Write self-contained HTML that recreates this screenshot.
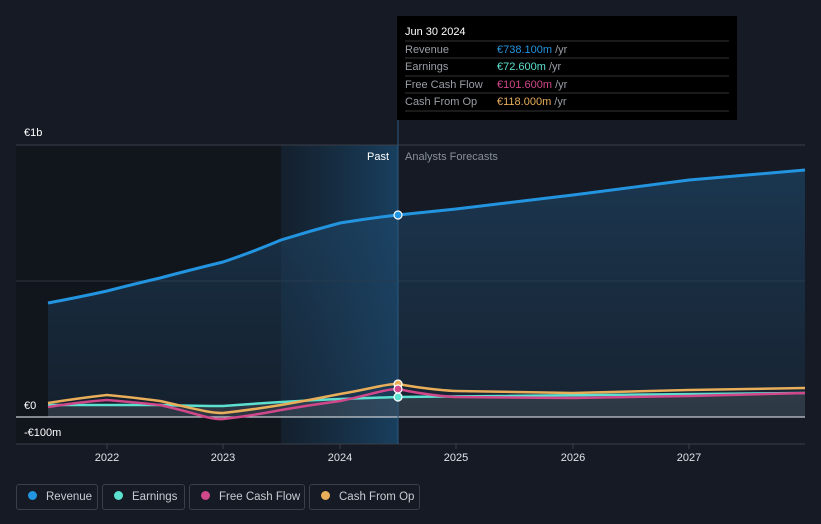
<!DOCTYPE html>
<html><head><style>
html,body{margin:0;background:#151a24;width:821px;height:524px;overflow:hidden;font-family:"Liberation Sans",sans-serif;}
.lg{position:absolute;top:484px;height:26px;border:1px solid #3a3f4a;border-radius:3px;color:#c8ccd2;font-size:11.5px;line-height:24px;box-sizing:border-box;white-space:nowrap;overflow:hidden;}
.lg i{display:inline-block;width:9px;height:9px;border-radius:50%;margin:0 9px 0 11px;}
</style></head><body>
<svg width="821" height="524" style="position:absolute;left:0;top:0" font-family="Liberation Sans, sans-serif">
<defs>
<linearGradient id="hl" x1="0" x2="1"><stop offset="0" stop-color="#1a3a55" stop-opacity="0.3"/><stop offset="1" stop-color="#1a4a70" stop-opacity="0.8"/></linearGradient>
<linearGradient id="ra" x1="0" y1="0" x2="0" y2="1"><stop offset="0" stop-color="#1e4a6e" stop-opacity="0.6"/><stop offset="1" stop-color="#1e3a55" stop-opacity="0.3"/></linearGradient>
</defs>
<rect x="16" y="145" width="382" height="299" fill="#11151c"/>
<rect x="281" y="145" width="117" height="299" fill="url(#hl)"/>
<line x1="16" y1="145" x2="805" y2="145" stroke="#3a3f4a"/>
<line x1="16" y1="281" x2="805" y2="281" stroke="#2e333d"/>
<line x1="16" y1="444" x2="805" y2="444" stroke="#3a3f4a"/>
<path d="M48,303 C80,297 107,291 107,291 C130,285 160,278 160,278 C190,270 223,262 223,262 C250,253 281,240 281,240 C310,231 340,223 340,223 C370,218 398,215 398,215 L456,209 L573,195 L689,180 L805,170 L805,417 L48,417Z" fill="url(#ra)"/>
<path d="M48,405 L160,405 L223,406 L340,399 L398,397 L805,393 L805,417 L48,417Z" fill="#5a606a" fill-opacity="0.35"/>
<line x1="16" y1="417" x2="805" y2="417" stroke="#c8ccd2" stroke-width="1.2"/>
<path d="M48,303 C80,297 107,291 107,291 C130,285 160,278 160,278 C190,270 223,262 223,262 C250,253 281,240 281,240 C310,231 340,223 340,223 C370,218 398,215 398,215 L456,209 L573,195 L689,180 L805,170" fill="none" stroke="#2394df" stroke-width="3"/>
<path d="M48,405 C100,405 160,405 160,405 C200,406 223,406 223,406 C290,401 340,399 340,399 C370,398 398,397 398,397 L805,393" fill="none" stroke="#5ce0d0" stroke-width="2.5"/>
<path d="M48,407 C80,402 107,400 107,400 C130,402 160,405 160,405 C200,414 210,420 223,419 C250,416 281,410 281,410 C310,405 340,401 340,401 C370,395 385,389 398,389 C430,396 456,397 456,397 L573,398 L689,396 L805,393" fill="none" stroke="#d0478a" stroke-width="2.5"/>
<path d="M48,403 C80,398 107,395 107,395 C130,397 160,401 160,401 C200,410 210,413 223,413 C250,410 281,405 281,405 C310,400 340,394 340,394 C370,389 385,384 398,384 C430,390 456,391 456,391 L573,393 L689,390 L805,388" fill="none" stroke="#e9ae5a" stroke-width="2.5"/>
<line x1="398" y1="120" x2="398" y2="444" stroke="#2a5a80" stroke-width="1"/>
<circle cx="398" cy="215" r="4" fill="#2394df" stroke="#fff" stroke-width="1.2"/>
<circle cx="398" cy="384" r="4" fill="#e9ae5a" stroke="#fff" stroke-width="1.2"/>
<circle cx="398" cy="389" r="4" fill="#d0478a" stroke="#fff" stroke-width="1.2"/>
<circle cx="398" cy="397" r="4" fill="#5ce0d0" stroke="#fff" stroke-width="1.2"/>
<g fill="#fff" font-size="11"><text x="24" y="136">€1b</text><text x="24" y="409">€0</text><text x="24" y="436">-€100m</text></g>
<text x="389" y="160" fill="#fff" font-size="11" text-anchor="end">Past</text>
<text x="405" y="160" fill="#8a909a" font-size="11">Analysts Forecasts</text>
<g fill="#e0e3e8" font-size="11" text-anchor="middle"><text x="107" y="461">2022</text><text x="223" y="461">2023</text><text x="340" y="461">2024</text><text x="456" y="461">2025</text><text x="573" y="461">2026</text><text x="689" y="461">2027</text></g>
<g stroke="#3a3f4a"><line x1="107" y1="444" x2="107" y2="449"/><line x1="223" y1="444" x2="223" y2="449"/><line x1="340" y1="444" x2="340" y2="449"/><line x1="456" y1="444" x2="456" y2="449"/><line x1="573" y1="444" x2="573" y2="449"/><line x1="689" y1="444" x2="689" y2="449"/></g>
<rect x="397" y="16" width="340" height="104" fill="#000"/>
<g stroke="#333" ><line x1="405" y1="41" x2="729" y2="41"/><line x1="405" y1="58" x2="729" y2="58"/><line x1="405" y1="76" x2="729" y2="76"/><line x1="405" y1="93" x2="729" y2="93"/><line x1="405" y1="111" x2="729" y2="111"/></g>
<g font-size="11"><text x="405" y="35" fill="#fff">Jun 30 2024</text>
<text x="405" y="53" fill="#9a9ea6">Revenue</text><text x="497" y="53" fill="#2394df">€738.100m <tspan fill="#9a9ea6">/yr</tspan></text>
<text x="405" y="70" fill="#9a9ea6">Earnings</text><text x="497" y="70" fill="#5ce0d0">€72.600m <tspan fill="#9a9ea6">/yr</tspan></text>
<text x="405" y="88" fill="#9a9ea6">Free Cash Flow</text><text x="497" y="88" fill="#d0478a">€101.600m <tspan fill="#9a9ea6">/yr</tspan></text>
<text x="405" y="105" fill="#9a9ea6">Cash From Op</text><text x="497" y="105" fill="#e9ae5a">€118.000m <tspan fill="#9a9ea6">/yr</tspan></text></g>
</svg>
<div class="lg" style="left:16px;width:82px"><i style="background:#2394df"></i>Revenue</div>
<div class="lg" style="left:102px;width:83px"><i style="background:#5ce0d0"></i>Earnings</div>
<div class="lg" style="left:189px;width:116px"><i style="background:#d0478a"></i>Free Cash Flow</div>
<div class="lg" style="left:309px;width:111px"><i style="background:#e9ae5a"></i>Cash From Op</div>
</body></html>
